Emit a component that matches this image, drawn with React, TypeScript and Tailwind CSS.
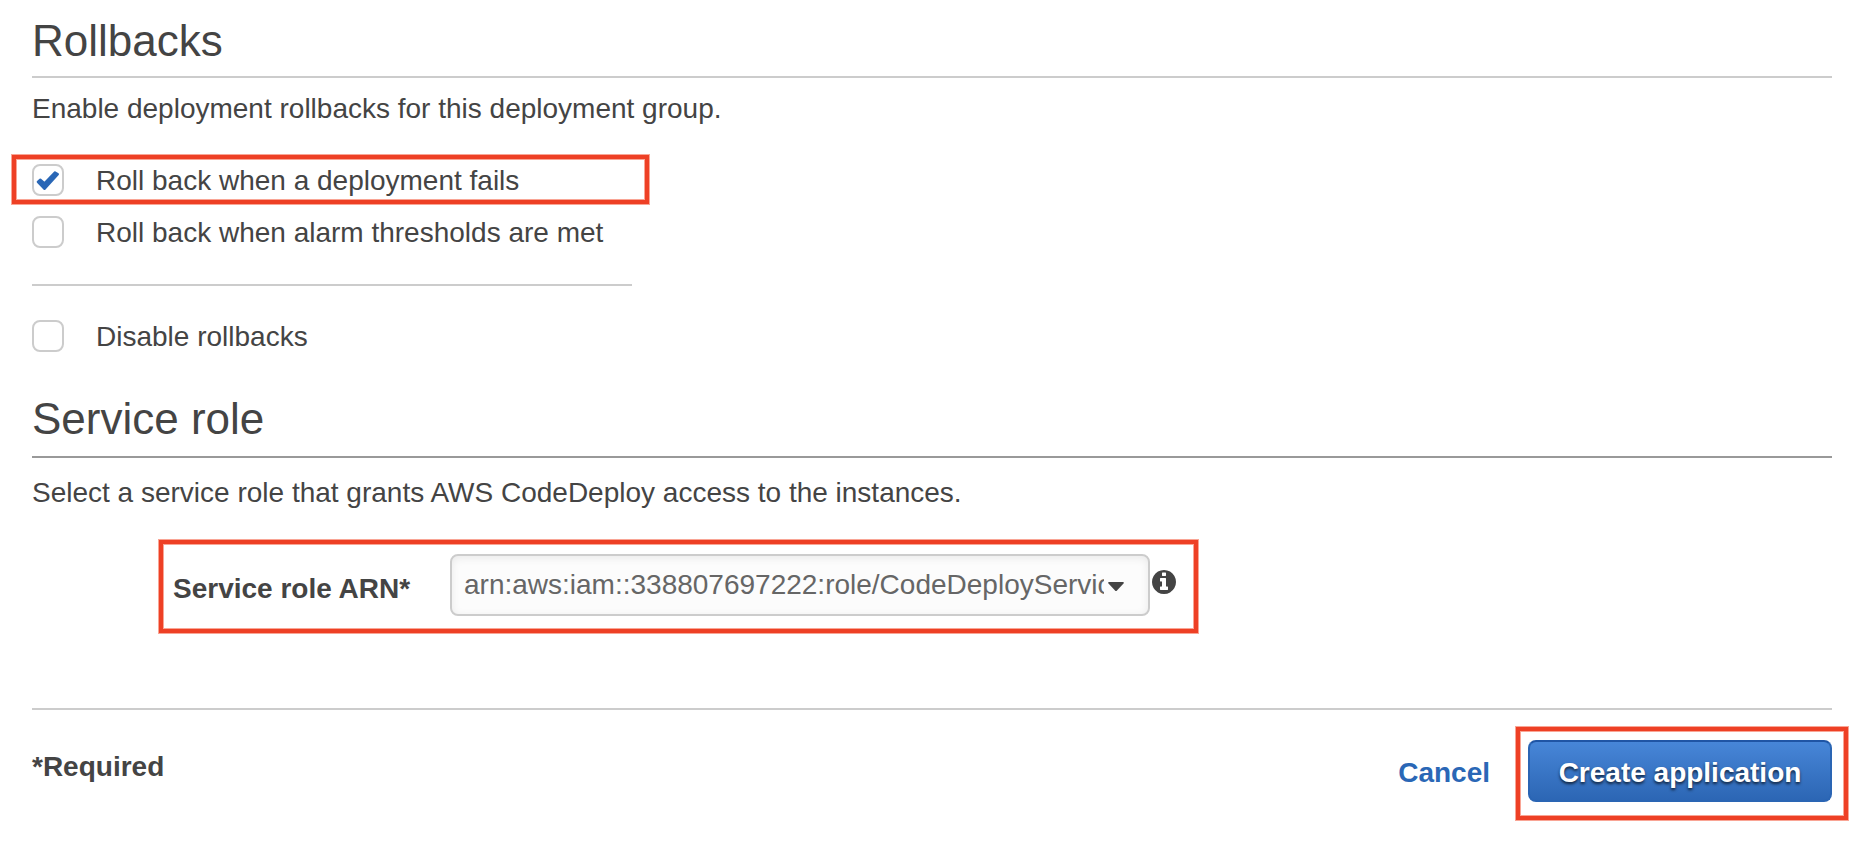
import { useState, type ReactNode } from 'react';

/** Red frame drawn over the parts of the form that need attention. */
function Highlight({ className }: { className: string }) {
  return (
    <span
      aria-hidden="true"
      className={`pointer-events-none absolute border-4 border-[#ee4025] shadow-[0_0_0_1px_#f9a595,inset_0_0_0_1px_#f9a595] ${className}`}
    />
  );
}

function InfoIcon() {
  return (
    <svg viewBox="0 128 1536 1536" aria-hidden="true" className="size-6 fill-current">
      <path d="M1024 1376v-160q0-14-9-23t-23-9h-96v-512q0-14-9-23t-23-9h-320q-14 0-23 9t-9 23v160q0 14 9 23t23 9h96v320h-96q-14 0-23 9t-9 23v160q0 14 9 23t23 9h448q14 0 23-9t9-23zm-128-896v-160q0-14-9-23t-23-9h-192q-14 0-23 9t-9 23v160q0 14 9 23t23 9h192q14 0 23-9t9-23zm640 416q0 209-103 385.500t-279.500 279.500-385.500 103-385.500-103-279.500-279.500-103-385.500 103-385.500 279.500-279.500 385.500-103 385.500 103 279.500 279.500 103 385.500z" />
    </svg>
  );
}

interface CheckRowProps {
  id: string;
  label: string;
  checked: boolean;
  onChange: (value: boolean) => void;
  children?: ReactNode;
}

function CheckRow({ id, label, checked, onChange, children }: CheckRowProps) {
  return (
    <div className="relative flex h-9 items-center gap-8">
      <span className="grid size-8 shrink-0">
        <input
          id={id}
          type="checkbox"
          checked={checked}
          onChange={(e) => onChange(e.target.checked)}
          className="col-start-1 row-start-1 size-8 appearance-none rounded-lg border-2 border-[#cccccc] bg-white"
        />
        {checked && (
          <svg
            viewBox="0 0 32 32"
            aria-hidden="true"
            className="pointer-events-none col-start-1 row-start-1 size-8 fill-[#2a67b6] stroke-[#2a67b6]"
          >
            <path
              d="M5.8 17.9 8.3 15.6 12.4 19.2 23 8.3 25.9 10.2 12.5 24.9Z"
              strokeWidth="2.2"
              strokeLinejoin="round"
            />
          </svg>
        )}
      </span>
      <label htmlFor={id} className="pt-0.5">
        {label}
      </label>
      {children}
    </div>
  );
}

export default function App() {
  const [onFailure, setOnFailure] = useState(true);
  const [onAlarm, setOnAlarm] = useState(false);
  const [disabled, setDisabled] = useState(false);

  return (
    <form
      onSubmit={(e) => e.preventDefault()}
      className="min-h-screen bg-white pt-[15px] pr-[34px] pb-9 pl-8 font-['Liberation_Sans',Arial,sans-serif] text-[28px] leading-9 text-[#444444]"
    >
      <section>
        <h2 className="border-b-2 border-[#cccccc] pb-[9px] text-[44px] leading-[52px]">
          Rollbacks
        </h2>
        <p className="mt-[13px]">Enable deployment rollbacks for this deployment group.</p>

        <div className="mt-[35px] w-[600px]">
          <div className="flex flex-col gap-4 border-b-2 border-[#cccccc] pb-[34px]">
            <CheckRow
              id="rollback-failure"
              label="Roll back when a deployment fails"
              checked={onFailure}
              onChange={setOnFailure}
            >
              <Highlight className="-top-[7px] -right-[17px] -bottom-[6px] -left-5" />
            </CheckRow>
            <CheckRow
              id="rollback-alarm"
              label="Roll back when alarm thresholds are met"
              checked={onAlarm}
              onChange={setOnAlarm}
            />
          </div>
          <div className="pt-8">
            <CheckRow
              id="rollback-disable"
              label="Disable rollbacks"
              checked={disabled}
              onChange={setDisabled}
            />
          </div>
        </div>
      </section>

      <section className="mt-[39px]">
        <h2 className="border-b-2 border-[#999999] pb-[11px] text-[44px] leading-[52px]">
          Service role
        </h2>
        <p className="mt-[17px]">
          Select a service role that grants AWS CodeDeploy access to the instances.
        </p>

        <div className="relative mt-[43px] ml-[141px] flex w-fit items-center">
          <label htmlFor="service-role" className="w-[237px] pt-[7px] font-bold whitespace-nowrap">
            Service role ARN*
          </label>
          <div className="ml-10 grid w-[700px]">
            <select
              id="service-role"
              className="col-start-1 row-start-1 h-[62px] w-full appearance-none rounded-lg border-2 border-[#cccccc] bg-[#fcfcfc] pr-11 pl-3 text-[#666666] shadow-[inset_0_2px_8px_rgba(0,0,0,0.08)]"
            >
              <option>arn:aws:iam::338807697222:role/CodeDeployServiceRole</option>
            </select>
            <svg
              viewBox="0 0 16 10"
              aria-hidden="true"
              className="pointer-events-none col-start-1 row-start-1 mt-1 mr-[26px] h-[10px] w-4 self-center justify-self-end fill-[#444444]"
            >
              <path d="M1 0H15Q16.4 0.3 15.5 1.5L9 8.6Q8 9.6 7 8.6L0.5 1.5Q-0.4 0.3 1 0Z" />
            </svg>
          </div>
          <button
            type="button"
            aria-label="About the service role"
            className="ml-[2px] self-start pt-4"
          >
            <InfoIcon />
          </button>
          <Highlight className="-top-[14px] -right-[22px] -bottom-[17px] -left-[14px]" />
        </div>
      </section>

      <footer className="mt-[92px] flex items-start justify-between border-t-2 border-[#cccccc] pt-[30px]">
        <p className="pt-[9px] font-bold">*Required</p>
        <div className="flex items-center gap-[38px] font-bold">
          <a href="#cancel" className="pt-1 text-[#2a67b6]">
            Cancel
          </a>
          <div className="relative">
            <button
              type="submit"
              className="block h-[62px] w-[304px] rounded-lg border-2 border-[#2a65b4] border-t-[#1f55a5] bg-linear-to-b from-[#4887d9] to-[#2b65b3] bg-origin-border pt-1 text-center text-white [text-shadow:0_2px_3px_rgba(0,0,0,0.7)]"
            >
              Create application
            </button>
            <Highlight className="-top-[13px] -right-4 -bottom-[18px] -left-3" />
          </div>
        </div>
      </footer>
    </form>
  );
}
